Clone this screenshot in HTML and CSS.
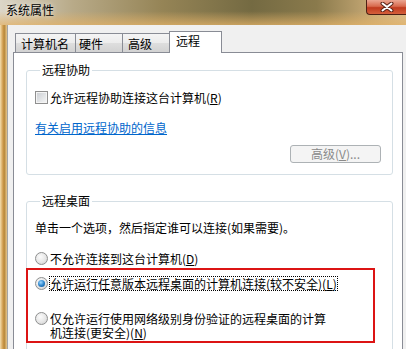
FILE: index.html
```html
<!DOCTYPE html>
<html lang="zh-CN">
<head>
  <meta charset="UTF-8" />
  <title>系统属性</title>
  <link rel="stylesheet" href="styles.css">
</head>
<body>
  <div class="titlebar">
    <span class="title">系统属性</span>
    <span class="close">
      <svg width="14" height="10" viewBox="0 0 14 10">
        <path d="M2.5 1.5 L11.5 8.5 M11.5 1.5 L2.5 8.5" stroke="#5a2418" stroke-width="4" stroke-linecap="round"/>
        <path d="M2.5 1.5 L11.5 8.5 M11.5 1.5 L2.5 8.5" stroke="#fff" stroke-width="2" stroke-linecap="round"/>
      </svg>
    </span>
  </div>
  <div class="frame">
    <div class="edge"></div>
    <div class="client">
      <div class="tabs">
        <div class="tab t1">计算机名</div>
        <div class="tab t2">硬件</div>
        <div class="tab t3">高级</div>
        <div class="tab active">远程</div>
      </div>
      <div class="panel">
        <fieldset class="group g1">
          <legend>远程协助</legend>
          <div class="row">
            <span class="checkbox"></span>
            <span>允许远程协助连接这台计算机(<u>R</u>)</span>
          </div>
          <a class="link">有关启用远程协助的信息</a>
          <div class="btn-row">
            <span class="btn">高级(<u>V</u>)...</span>
          </div>
        </fieldset>
        <fieldset class="group g2">
          <legend>远程桌面</legend>
          <p class="hint">单击一个选项，然后指定谁可以连接(如果需要)。</p>
          <div class="options">
            <div class="row">
              <span class="radio"></span>
              <span>不允许连接到这台计算机(<u>D</u>)</span>
            </div>
            <div class="row opt2">
              <span class="radio checked"></span>
              <span class="focus">允许运行任意版本远程桌面的计算机连接(较不安全)(<u>L</u>)</span>
            </div>
            <div class="row opt3">
              <span class="radio"></span>
              <span class="wrap">
                <span class="line">仅允许运行使用网络级别身份验证的远程桌面的计算</span>
                <span class="line">机连接(更安全)(<u>N</u>)</span>
              </span>
            </div>
            <div class="mark"></div>
          </div>
        </fieldset>
      </div>
    </div>
  </div>
</body>
</html>
```

FILE: styles.css
```css
body {
  margin: 0;
  width: 406px;
  height: 349px;
  overflow: hidden;
  font-family: "Noto Sans CJK SC", sans-serif;
  font-size: 12px;
  color: #000;
  background: #f0f0f0;
}

u {
  display: inline-block;
  line-height: 12px;
}

.titlebar {
  height: 25px;
  display: flex;
  justify-content: space-between;
  align-items: flex-start;
  background:
    linear-gradient(to bottom, rgba(0, 0, 0, 0) 45%, rgba(226, 178, 104, 0.75) 100%),
    linear-gradient(to right, #dcd6c8 0%, #b8aa88 18%, #958456 40%, #746a42 62%, #8a7a4c 78%, #c8aa76 92%, #dcc092 100%);
}

.title {
  padding: 3px 0 0 6px;
  line-height: 14px;
  text-shadow: 0 0 5px rgba(255, 255, 255, 0.9);
}

.close {
  width: 40px;
  height: 15px;
  box-sizing: border-box;
  border: 1px solid #4e2014;
  border-top: none;
  border-right: none;
  border-radius: 0 0 0 4px;
  background: linear-gradient(#eba692, #d86a4e 45%, #c03a1e 55%, #d5603c);
  display: flex;
  justify-content: center;
  align-items: center;
}

.frame {
  display: flex;
  height: 324px;
}

.edge {
  width: 7px;
  background: linear-gradient(to right, #f3deae, #d6a65c 35%, #b88636 60%, #e4c68e);
  border-right: 1px solid #a4a4a4;
}

.client {
  flex: 1;
  padding-top: 6px;
  background: #f0f0f0;
}

.tabs {
  display: flex;
  align-items: flex-end;
  height: 21px;
  padding-left: 7px;
}

.tab {
  box-sizing: border-box;
  height: 19px;
  padding: 4px 0 0 5px;
  line-height: 12px;
  border: 1px solid #898c95;
  border-bottom: none;
  background: linear-gradient(#f4f4f4, #ececec 50%, #dedede 51%, #d2d2d2);
}

.tab + .tab { margin-left: -1px; }

.t1 { width: 61px; }
.t2 { width: 48px; padding-left: 3px; }
.t3 { width: 48px; }

.tab.active {
  width: 53px;
  height: 22px;
  margin-bottom: -1px;
  padding: 3px 0 0 6px;
  background: #fff;
  position: relative;
  z-index: 1;
}

.panel {
  height: 300px;
  margin: 0 3px 0 5px;
  padding: 11px 9px 0 12px;
  background: #fff;
  border: 1px solid #898c95;
}

.group {
  margin: 0;
  padding: 15px 0 11px 8px;
  border: 1px solid #d5dfe5;
  border-radius: 3px;
}

.group legend {
  margin-left: 5px;
  padding: 0 2px;
  line-height: 12px;
}

.g2 {
  margin-top: 20px;
  padding-top: 14px;
}

.row {
  display: flex;
  align-items: flex-start;
  line-height: 13px;
}

.checkbox {
  flex: none;
  width: 13px;
  height: 13px;
  box-sizing: border-box;
  margin-right: 2px;
  border: 1px solid #8f8f8f;
  box-shadow: inset 0 0 0 1px #f4f4f4;
  background: linear-gradient(135deg, #c9ccd1, #e4e6e8 60%, #f6f6f6);
}

.link {
  display: block;
  width: max-content;
  margin-top: 17px;
  line-height: 13px;
  color: #0066cc;
  text-decoration: underline;
}

.btn-row {
  display: flex;
  justify-content: flex-end;
  margin-top: 11px;
  padding-right: 11px;
}

.btn {
  width: 91px;
  height: 18px;
  box-sizing: border-box;
  border: 1px solid #adb2b5;
  border-radius: 3px;
  background: #f4f4f4;
  color: #8a8a8a;
  text-align: center;
  line-height: 16px;
}

.hint {
  margin: 0;
  line-height: 13px;
}

.options {
  position: relative;
  margin-top: 18px;
}

.radio {
  flex: none;
  width: 13px;
  height: 13px;
  box-sizing: border-box;
  margin-right: 2px;
  border: 1px solid #8e8f8f;
  border-radius: 50%;
  background: radial-gradient(circle at 40% 35%, #fbfbfb, #e6e6e6 55%, #c8c8c8);
  display: flex;
  justify-content: center;
  align-items: center;
}

.radio.checked::after {
  content: "";
  width: 7px;
  height: 7px;
  border-radius: 50%;
  background: radial-gradient(circle at 40% 35%, #9fd8ff, #2f86cc 50%, #0d4a8a);
}

.opt2 { margin-top: 12px; }
.opt3 { margin-top: 22px; }

.focus {
  outline: 1px dotted #000;
}

.wrap .line {
  display: block;
  line-height: 14px;
}

.mark {
  position: absolute;
  left: -9px;
  top: 16px;
  width: 349px;
  height: 75px;
  box-sizing: border-box;
  border: 2px solid #dc1414;
}
```
